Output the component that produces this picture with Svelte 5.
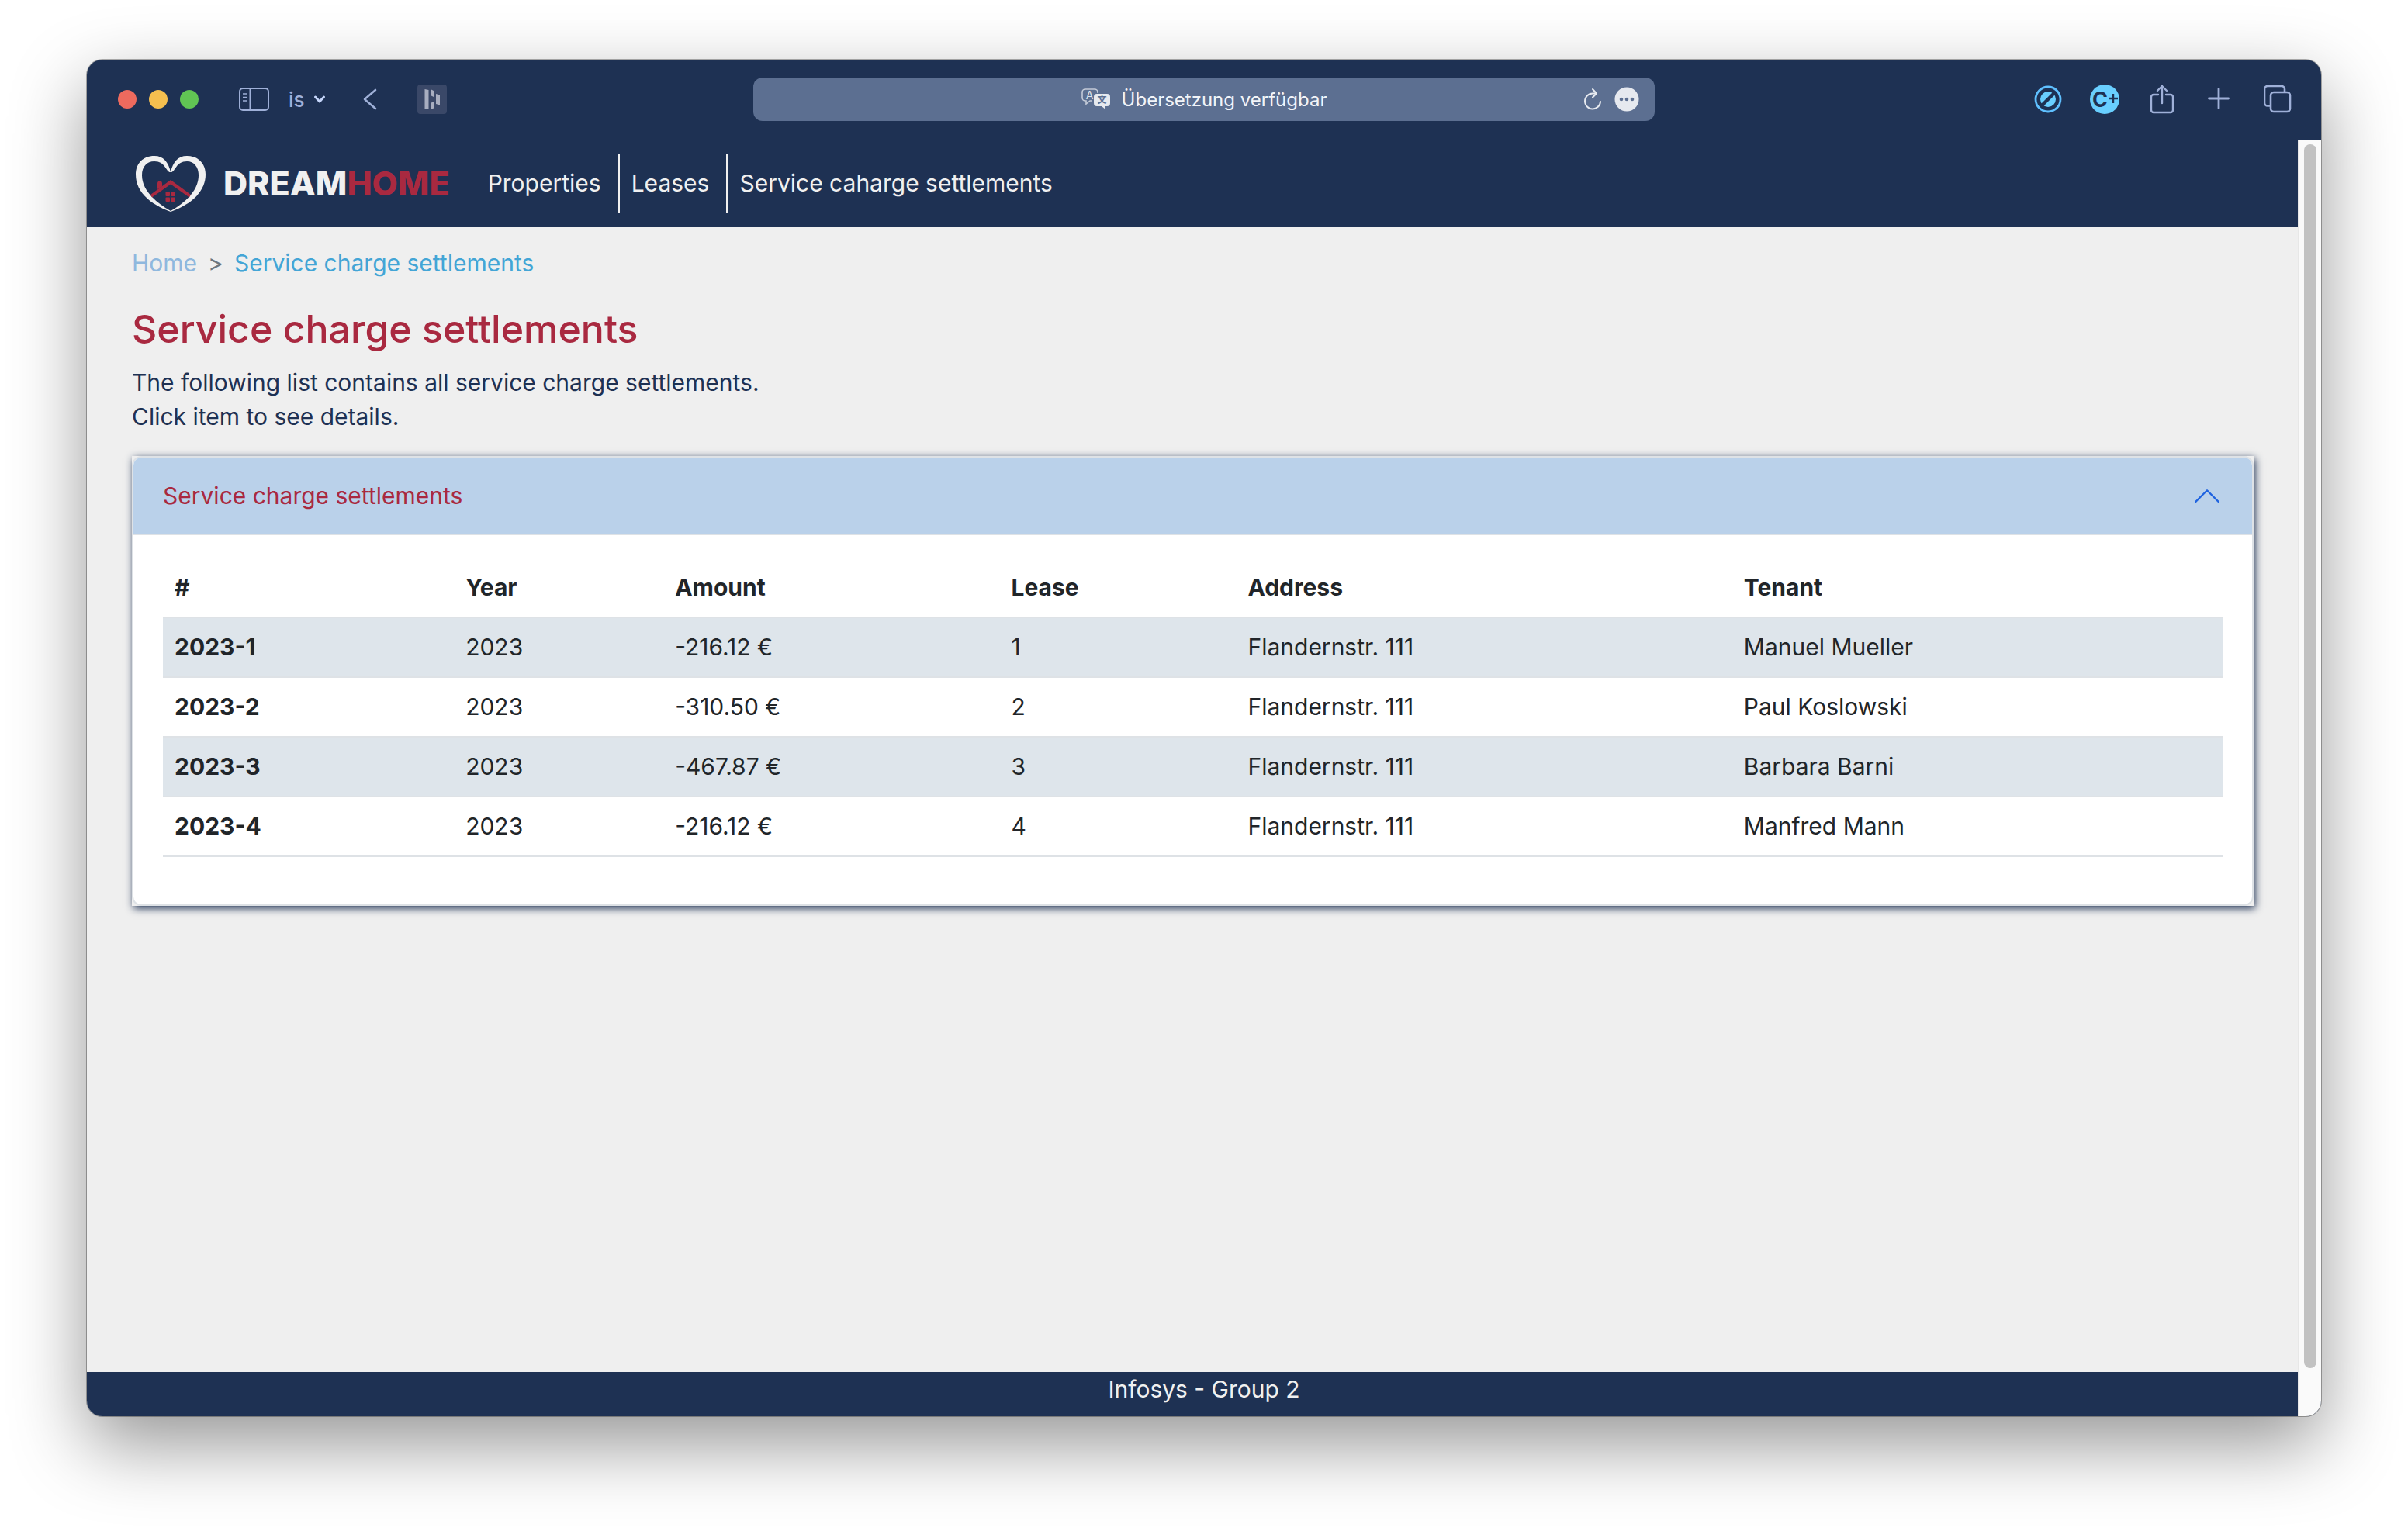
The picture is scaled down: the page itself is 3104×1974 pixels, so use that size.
<script>
  const columns = [
    { key: 'id', label: '#' },
    { key: 'year', label: 'Year' },
    { key: 'amount', label: 'Amount' },
    { key: 'lease', label: 'Lease' },
    { key: 'address', label: 'Address' },
    { key: 'tenant', label: 'Tenant' },
  ];

  const settlements = [
    { id: '2023-1', year: '2023', amount: '-216.12 €', lease: '1', address: 'Flandernstr. 111', tenant: 'Manuel Mueller' },
    { id: '2023-2', year: '2023', amount: '-310.50 €', lease: '2', address: 'Flandernstr. 111', tenant: 'Paul Koslowski' },
    { id: '2023-3', year: '2023', amount: '-467.87 €', lease: '3', address: 'Flandernstr. 111', tenant: 'Barbara Barni' },
    { id: '2023-4', year: '2023', amount: '-216.12 €', lease: '4', address: 'Flandernstr. 111', tenant: 'Manfred Mann' },
  ];

  let open = $state(true);
  let location = $state('Übersetzung verfügbar');
</script>

<div class="desktop">
  <div class="window">
    <header class="toolbar">
      <div class="tools tools-left">
        <div class="lights">
          <button class="light red" aria-label="Close"></button>
          <button class="light yellow" aria-label="Minimise"></button>
          <button class="light green" aria-label="Zoom"></button>
        </div>
        <button class="tool sidebar" aria-label="Sidebar">
          <svg width="40" height="32" viewBox="0 0 40 32" fill="none" stroke="currentColor" stroke-width="2">
            <rect x="1" y="2" width="37" height="28" rx="4" />
            <path d="M14.500 2v28" />
            <path d="M5 9h6M5 13.500h6M5 18h6" stroke-width="1.500" />
          </svg>
        </button>
        <button class="tool profile">
          <span>is</span>
          <svg width="16" height="12" viewBox="0 0 16 12" fill="none" stroke="#c6d6fb" stroke-width="3" stroke-linecap="round" stroke-linejoin="round">
            <path d="M2.500 3l5.500 6 5.500-6" />
          </svg>
        </button>
        <button class="tool back" aria-label="Back">
          <svg width="18" height="28" viewBox="0 0 18 28" fill="none" stroke="currentColor" stroke-width="2.600" stroke-linecap="round" stroke-linejoin="round">
            <path d="M16 2L2 14l14 12" />
          </svg>
        </button>
        <button class="tool extension" aria-label="Extension">
          <svg width="38" height="38" viewBox="0 0 38 38">
            <rect width="38" height="38" rx="4" fill="#3a4868" />
            <g fill="#a8aec0">
              <path d="M9.500 6l5 1v25l-5-1z" />
              <path d="M17 6l5 2.500v8l-5-2.500zM17 24l5-2.500v8.500l-5 2.500zM24 12l5 1.500v13l-5-1.500z" />
            </g>
          </svg>
        </button>
      </div>

      <div class="address">
        <div class="address-main">
          <svg width="38" height="28" viewBox="0 0 38 28">
            <path d="M14 16H11l-5 4v-4H5a4 4 0 0 1-4-4V5a4 4 0 0 1 4-4h12a4 4 0 0 1 4 4v1" fill="none" stroke="#c3cad7" stroke-width="1.600" />
            <text x="10.500" y="14" text-anchor="middle" font-family="Inter, sans-serif" font-size="14" fill="#dfe3ea">A</text>
            <path d="M20 7h13a4 4 0 0 1 4 4v8a4 4 0 0 1-4 4h-2v4l-5-4h-6a4 4 0 0 1-4-4v-8a4 4 0 0 1 4-4z" fill="#e6e9ef" />
            <text x="26.500" y="19" text-anchor="middle" font-family="'Noto Sans CJK JP', sans-serif" font-weight="700" font-size="12" fill="#5c6f91">文</text>
          </svg>
          <input aria-label="Address" bind:value={location} />
        </div>
        <button class="tool reload" aria-label="Reload">
          <svg width="24" height="30" viewBox="0 0 24 30" fill="none" stroke="#e6e9ef" stroke-width="2" stroke-linecap="round" stroke-linejoin="round">
            <path d="M22 18a10 10 0 1 1-10-10.500h4M12 2l5 5.500-5 5" />
          </svg>
        </button>
        <button class="tool" aria-label="Page options">
          <svg width="32" height="32" viewBox="0 0 32 32">
            <circle cx="16" cy="16" r="15.500" fill="#e6e9ef" />
            <g fill="#5c6f91"><circle cx="9" cy="16" r="2.300" /><circle cx="16" cy="16" r="2.300" /><circle cx="23" cy="16" r="2.300" /></g>
          </svg>
        </button>
      </div>

      <div class="tools tools-right">
        <div class="tools extensions">
          <button class="tool" aria-label="Content blocker">
            <svg width="36" height="36" viewBox="0 0 36 36">
              <circle cx="18" cy="18" r="16" fill="none" stroke="#5fc0ff" stroke-width="2.800" />
              <circle cx="18" cy="18" r="10" fill="#69cfff" />
              <path d="M9 27L27 9" stroke="#1e3153" stroke-width="4.500" />
            </svg>
          </button>
          <button class="tool" aria-label="C+ extension">
            <svg width="38" height="38" viewBox="0 0 38 38">
              <circle cx="19" cy="19" r="19" fill="#69cfff" />
              <text x="3" y="29" font-family="Inter, sans-serif" font-weight="700" font-size="27" fill="#1e3153">C</text>
              <path d="M24 18h12M30 12v12" stroke="#1e3153" stroke-width="2.400" />
            </svg>
          </button>
        </div>
        <div class="tools actions">
          <button class="tool" aria-label="Share">
            <svg width="30" height="38" viewBox="0 0 30 38" fill="none" stroke="currentColor" stroke-width="2.400" stroke-linecap="round" stroke-linejoin="round">
              <path d="M10 13H4a3 3 0 0 0-3 3v17a3 3 0 0 0 3 3h22a3 3 0 0 0 3-3V16a3 3 0 0 0-3-3h-6M15 24V2M9 8l6-6 6 6" />
            </svg>
          </button>
          <button class="tool" aria-label="New tab">
            <svg width="28" height="30" viewBox="0 0 28 30" fill="none" stroke="currentColor" stroke-width="2.800" stroke-linecap="round">
              <path d="M1.500 14h25M14 1.500v25" />
            </svg>
          </button>
          <button class="tool" aria-label="Show tabs">
            <svg width="36" height="36" viewBox="0 0 36 36" fill="none" stroke="currentColor" stroke-width="2.600">
              <path d="M9 26.500H5a4 4 0 0 1-4-4V5a4 4 0 0 1 4-4h18a4 4 0 0 1 4 4v3" />
              <rect x="9" y="9" width="25" height="25" rx="4" />
            </svg>
          </button>
        </div>
      </div>
    </header>

    <div class="viewport">
      <div class="page">
        <nav class="navbar">
          <a class="brand" href="/">
            <svg width="92" height="74" viewBox="0 0 92 74">
              <path fill="#f0f0f0" fill-rule="evenodd" d="M46 22C49 9 55 1 67 1C82 1 91 11 91 25C91 45 76 62 46 73C16 62 1 45 1 25C1 11 10 1 25 1C37 1 43 9 46 22ZM45 22C40 21 39 8 25 8C15 8 9 15 9 26C9 43 23 59 46 72C69 59 82 43 82 26C82 15 76 8 67 8C53 8 52 21 47 22Z" />
              <g fill="#a92940">
                <path d="M20 51L46 32L72 51L70 54.500L46 37.500L22 54.500Z" />
                <path d="M29 44v-7.500a3 3 0 0 1 6 0v4z" />
                <rect x="39.500" y="47.500" width="5.500" height="5.500" rx="1" />
                <rect x="46.500" y="47.500" width="5.500" height="5.500" rx="1" />
                <rect x="39.500" y="54.500" width="5.500" height="5.500" rx="1" />
                <rect x="46.500" y="54.500" width="5.500" height="5.500" rx="1" />
              </g>
            </svg>
            <span class="wordmark">DREAM<span>HOME</span></span>
          </a>
          <ul class="menu">
            <li><a href="#properties">Properties</a></li>
            <li><a href="#leases">Leases</a></li>
            <li><a href="#settlements">Service caharge settlements</a></li>
          </ul>
        </nav>

        <main>
          <nav class="breadcrumb" aria-label="Breadcrumb">
            <a class="home" href="/">Home</a>
            <span class="divider">&gt;</span>
            <a class="current" href="#settlements">Service charge settlements</a>
          </nav>
          <h1>Service charge settlements</h1>
          <p>The following list contains all service charge settlements.<br />Click item to see details.</p>

          <section class="accordion">
            <div class="item">
              <button class="accordion-head" class:open aria-expanded={open} onclick={() => (open = !open)}>
                <span>Service charge settlements</span>
                <svg width="36" height="36" viewBox="0 0 16 16" fill="none" stroke="#1f63e0" stroke-linecap="round" stroke-linejoin="round">
                  <path d="M1.500 11.500l6.500-6.500 6.500 6.500" />
                </svg>
              </button>
              {#if open}
                <div class="accordion-body">
                  <table>
                    <colgroup>
                      {#each columns as column}
                        <col class="col-{column.key}" />
                      {/each}
                    </colgroup>
                    <thead>
                      <tr>
                        {#each columns as column}
                          <th scope="col">{column.label}</th>
                        {/each}
                      </tr>
                    </thead>
                    <tbody>
                      {#each settlements as row}
                        <tr>
                          <th scope="row">{row.id}</th>
                          {#each columns.slice(1) as column}
                            <td>{row[column.key]}</td>
                          {/each}
                        </tr>
                      {/each}
                    </tbody>
                  </table>
                </div>
              {/if}
            </div>
          </section>
        </main>

        <footer>Infosys - Group 2</footer>
      </div>
      <div class="scrollbar"><div class="thumb"></div></div>
    </div>
  </div>
</div>

<style>
  :global(body) {
    background: #fff;
  }

  .desktop,
  .desktop * {
    box-sizing: border-box;
  }

  .desktop {
    display: flex;
    min-height: 100vh;
    padding: 77px 112px 148px;
    overflow: hidden;
    font-family: Inter, 'Liberation Sans', sans-serif;
    font-size: 30px;
    line-height: 45px;
    color: #212529;
  }

  a {
    color: inherit;
    text-decoration: none;
  }

  button {
    padding: 0;
    border: 0;
    background: none;
    color: inherit;
    font: inherit;
  }

  svg {
    display: block;
    flex: none;
  }

  .window {
    display: flex;
    flex: 1;
    flex-direction: column;
    min-width: 0;
    overflow: hidden;
    border-radius: 20px;
    background: #1e3153;
    box-shadow:
      0 0 0 1px rgba(0, 0, 0, 0.3),
      0 36px 96px rgba(0, 0, 0, 0.42);
  }

  /* Browser toolbar */
  .toolbar {
    display: grid;
    grid-template-columns: 1fr 1162px 1fr;
    align-items: center;
    height: 103px;
    padding-bottom: 1px;
    color: #9fb0d8;
  }

  .tools {
    display: flex;
    align-items: center;
  }

  .tools-left {
    padding-left: 40px;
  }

  .tools-right {
    justify-content: flex-end;
    gap: 40px;
    padding-right: 38px;
  }

  .extensions {
    gap: 36px;
  }

  .actions {
    gap: 44px;
  }

  .lights {
    display: flex;
    gap: 16px;
  }

  .light {
    width: 24px;
    height: 24px;
    border-radius: 50%;
  }

  .red {
    background: #ed6a5e;
  }

  .yellow {
    background: #f5bf4f;
  }

  .green {
    background: #61c554;
  }

  .sidebar {
    margin-left: 52px;
  }

  .profile {
    display: flex;
    align-items: center;
    gap: 11px;
    margin-left: 24px;
    font-size: 26px;
    font-weight: 500;
  }

  .back {
    margin-left: 48px;
  }

  .extension {
    margin-left: 52px;
  }

  .address {
    display: grid;
    grid-template-columns: 1fr 24px 32px;
    align-items: center;
    gap: 16px;
    height: 56px;
    padding: 0 20px 0 108px;
    border-radius: 12px;
    background: #5c6f91;
  }

  .address-main {
    display: flex;
    align-items: center;
    justify-content: center;
    gap: 14px;
  }

  .address input {
    field-sizing: content;
    padding: 0;
    border: 0;
    outline: 0;
    background: none;
    color: #f2f4f8;
    font: inherit;
    font-size: 24px;
  }

  /* Page area */
  .viewport {
    display: flex;
    flex: 1;
    min-height: 0;
  }

  .page {
    display: flex;
    flex: 1;
    flex-direction: column;
    min-width: 0;
    background: #efefef;
  }

  .scrollbar {
    width: 30px;
    padding: 6px 6px 62px;
    border-left: 2px solid #e7e7e7;
    background: #fafafa;
  }

  .thumb {
    width: 16px;
    height: 100%;
    border-radius: 8px;
    background: #c2c2c2;
  }

  .navbar {
    display: flex;
    align-items: center;
    height: 113px;
    padding-left: 62px;
    background: #1e3153;
    color: #f0f0f0;
  }

  .brand {
    display: flex;
    align-items: center;
    gap: 22px;
  }

  .wordmark {
    font-size: 43px;
    font-weight: 800;
  }

  .wordmark span {
    color: #a92940;
  }

  .menu {
    display: flex;
    margin: 0 0 0 34px;
    padding: 0;
    list-style: none;
  }

  .menu li {
    padding: 15px 22px 15px 15px;
    border-right: 2px solid #f0f0f0;
  }

  .menu li:last-child {
    border-right: 0;
  }

  main {
    flex: 1;
    padding: 24px 57px 0 58px;
  }

  .breadcrumb {
    display: flex;
    gap: 14px;
  }

  .home {
    color: #8fb8de;
  }

  .divider {
    color: #6c757d;
  }

  .current {
    color: #43a5d6;
  }

  h1 {
    margin: 32px 0 17px;
    color: #a92940;
    font-size: 50px;
    font-weight: 500;
    line-height: 60px;
  }

  p {
    margin: 0 0 29px;
    color: #1e3153;
    line-height: 44px;
  }

  .accordion {
    box-shadow: 2px 3px 10px #1e3153;
    background: #efefef;
  }

  .item {
    overflow: hidden;
    border: 2px solid #dee2e6;
    border-radius: 12px;
    background: #fff;
  }

  .accordion-head {
    display: flex;
    align-items: center;
    justify-content: space-between;
    width: 100%;
    height: 98px;
    padding: 0 40px 0 38px;
    background: #bad1ea;
    color: #a92940;
    text-align: left;
  }

  .accordion-head svg {
    transform: rotate(180deg);
  }

  .accordion-head.open svg {
    transform: none;
  }

  .accordion-body {
    padding: 30px 38px 61px;
    border-top: 2px solid #dee2e6;
  }

  table {
    width: 100%;
    border-collapse: separate;
    border-spacing: 0;
    table-layout: fixed;
    text-align: left;
  }

  .col-id {
    width: 14.13%;
  }

  .col-year {
    width: 10.17%;
  }

  .col-amount {
    width: 16.32%;
  }

  .col-lease {
    width: 11.49%;
  }

  .col-address {
    width: 24.08%;
  }

  th,
  td {
    padding: 15px;
    border-bottom: 2px solid #dee2e6;
  }

  th {
    font-weight: 700;
  }

  tbody tr:nth-child(odd) > * {
    background: #dee5eb;
  }

  footer {
    height: 57px;
    padding-left: 30px;
    background: #1e3153;
    color: #f0f0f0;
    text-align: center;
  }
</style>
